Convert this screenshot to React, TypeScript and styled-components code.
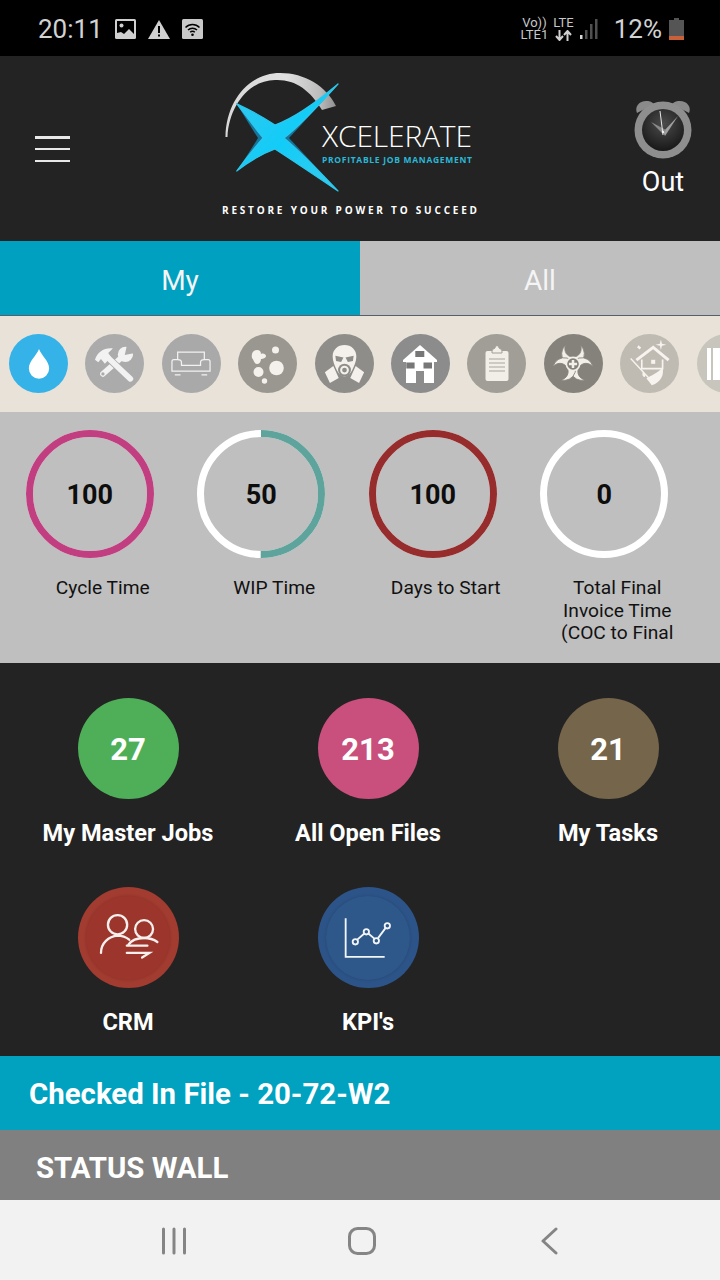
import React from "react";
import styled, { createGlobalStyle } from "styled-components";

const GlobalStyle = createGlobalStyle`
  html, body {
    margin: 0;
    padding: 0;
    background: #232323;
  }
  * {
    box-sizing: border-box;
  }
`;

const Page = styled.div`
  width: 720px;
  height: 1280px;
  display: flex;
  flex-direction: column;
  overflow: hidden;
  font-family: Roboto, "Liberation Sans", sans-serif;
`;

const StatusBar = styled.div`
  height: 56px;
  flex: none;
  background: #000;
  color: #d2d2d2;
  display: flex;
  align-items: center;
  padding: 2px 36px 0 38px;
  font-size: 26px;
  line-height: 30px;
`;

const StatusIcons = styled.div`
  display: flex;
  align-items: center;
  gap: 12px;
  margin-left: 12px;
`;

const StatusRight = styled.div`
  margin-left: auto;
  display: flex;
  align-items: center;
`;

const NetworkText = styled.div`
  display: flex;
  flex-direction: column;
  align-items: center;
  font-size: 13px;
  line-height: 12.5px;
  color: #c8c8c8;
  margin-right: 5px;
`;

const Battery = styled.span`
  margin-left: 7px;
  display: flex;
`;

const Percent = styled.span`
  margin-left: 15px;
`;

const Header = styled.header`
  height: 185px;
  flex: none;
  background: #232323;
  display: flex;
  padding-left: 35px;
`;

const MenuButton = styled.div`
  width: 35px;
  height: 26px;
  margin-top: 80px;
  display: flex;
  flex-direction: column;
  justify-content: space-between;
`;

const MenuLine = styled.span`
  height: 2.5px;
  background: #e8e8e8;
`;

const Logo = styled.svg`
  width: 260px;
  height: 150px;
  margin: 14px 0 0 150px;
  flex: none;
`;

const ClockBlock = styled.div`
  margin-left: auto;
  margin-right: 27px;
  width: 60px;
  padding-top: 43px;
  display: flex;
  flex-direction: column;
  align-items: center;
  color: #fff;
  font-size: 27px;
  line-height: 32px;
`;

const OutLabel = styled.span`
  margin-top: 7px;
`;

const Tabs = styled.div`
  height: 75px;
  flex: none;
  display: flex;
  border-bottom: 1px solid #55606a;
`;

const Tab = styled.div<{ $active?: boolean }>`
  flex: 1;
  display: flex;
  align-items: center;
  justify-content: center;
  padding-top: 4px;
  color: #f4f4f4;
  font-size: 28px;
  background: ${(p) => (p.$active ? "#00a0c0" : "#bfbfbf")};
`;

const CategoryStrip = styled.div`
  height: 96px;
  flex: none;
  background: #e8e2d9;
  display: flex;
  align-items: center;
  gap: 17.4px;
  padding: 0 0 1px 9px;
  overflow: hidden;
`;

const CategoryIcon = styled.div<{ $color: string }>`
  width: 59px;
  height: 59px;
  flex: none;
  border-radius: 50%;
  background: ${(p) => p.$color};
  display: flex;
  align-items: center;
  justify-content: center;
`;

const GaugeRow = styled.div`
  height: 251px;
  flex: none;
  background: #bfbfbf;
  display: flex;
  padding: 18px 0 0 17px;
`;

const GaugeColumn = styled.div`
  width: 171.5px;
  flex: none;
  display: flex;
  flex-direction: column;
  align-items: center;
`;

const GaugeDial = styled.div`
  width: 128px;
  height: 128px;
  position: relative;
  margin-right: 26px;
  padding-top: 2px;
  display: flex;
  align-items: center;
  justify-content: center;
  font-size: 27px;
  font-weight: 700;
  color: #0d0d0d;
`;

const GaugeRing = styled.svg`
  position: absolute;
  inset: 0;
`;

const GaugeValue = styled.span`
  position: relative;
`;

const GaugeLabel = styled.div`
  margin-top: 19px;
  width: 140px;
  text-align: center;
  font-size: 19.2px;
  line-height: 22.5px;
  color: #111;
`;

const Dashboard = styled.div`
  height: 393px;
  flex: none;
  background: #232323;
  display: grid;
  grid-template-columns: repeat(3, 240px);
  grid-auto-rows: 189px;
  padding: 35px 0 0 8px;
`;

const Tile = styled.div`
  display: flex;
  flex-direction: column;
  align-items: center;
`;

const TileCircle = styled.div<{ $color: string }>`
  width: 101px;
  height: 101px;
  flex: none;
  border-radius: 50%;
  background: ${(p) => p.$color};
  display: flex;
  align-items: center;
  justify-content: center;
  color: #fff;
  font-size: 31px;
  font-weight: 700;
`;

const TileNumber = styled.span`
  padding-top: 2px;
`;

const IconInner = styled.div<{ $color: string }>`
  width: 84px;
  height: 84px;
  border-radius: 50%;
  background: ${(p) => p.$color};
  box-shadow: 0 0 3px rgba(0, 0, 0, 0.18);
  display: flex;
  align-items: center;
  justify-content: center;
`;

const TileLabel = styled.div`
  margin-top: 20px;
  color: #fff;
  font-size: 23.6px;
  line-height: 28px;
  font-weight: 700;
  white-space: nowrap;
`;

const CheckedIn = styled.div`
  height: 74px;
  flex: none;
  background: #00a2c0;
  color: #fff;
  display: flex;
  align-items: center;
  padding: 2px 0 0 29px;
  font-size: 29.4px;
  font-weight: 700;
`;

const StatusWall = styled.div`
  height: 70px;
  flex: none;
  background: #808080;
  color: #fff;
  display: flex;
  align-items: center;
  padding: 6px 0 0 36px;
  font-size: 29.4px;
  font-weight: 700;
`;

const NavBar = styled.nav`
  height: 80px;
  flex: none;
  background: #f2f2f2;
  display: flex;
  align-items: center;
  gap: 161px;
  padding: 2px 0 0 161px;
`;

const gauges = [
  { value: "100", label: "Cycle Time", color: "#c13f80", pct: 100 },
  { value: "50", label: "WIP Time", color: "#5fa49c", pct: 50 },
  { value: "100", label: "Days to Start", color: "#962c2c", pct: 100 },
  { value: "0", label: "Total Final Invoice Time (COC to Final", color: "#fff", pct: 0 },
];

const Gauge = ({ value, label, color, pct }: (typeof gauges)[number]) => {
  const r = 60.5;
  const len = 2 * Math.PI * r;
  return (
    <GaugeColumn>
      <GaugeDial>
        <GaugeRing width="128" height="128">
          <circle cx="64" cy="64" r={r} fill="none" stroke="#fff" strokeWidth="7" />
          <circle
            cx="64"
            cy="64"
            r={r}
            fill="none"
            stroke={color}
            strokeWidth="7"
            strokeDasharray={`${(len * pct) / 100} ${len}`}
            transform="rotate(-90 64 64)"
          />
        </GaugeRing>
        <GaugeValue>{value}</GaugeValue>
      </GaugeDial>
      <GaugeLabel>{label}</GaugeLabel>
    </GaugeColumn>
  );
};

const Drop = () => (
  <svg width="22" height="31" viewBox="0 0 26 36">
    <path d="M13 1C16 9 25 15 25 24A12 12 0 0 1 1 24C1 15 10 9 13 1Z" fill="#fff" />
  </svg>
);

const Tools = () => (
  <svg width="43" height="40" viewBox="42 45 130 120">
    <path d="M72 135 140 75" stroke="#f2f2f2" strokeWidth="17" strokeLinecap="round" />
    <circle cx="140" cy="76" r="23" fill="#f2f2f2" />
    <path d="M138 78 146 42 178 70Z" fill="#ababab" />
    <circle cx="72" cy="135" r="5" fill="#ababab" />
    <path d="M85 84 155 150" stroke="#ababab" strokeWidth="22" />
    <path d="M85 84 155 150" stroke="#f2f2f2" strokeWidth="17" strokeLinecap="round" />
    <path d="M48 92C55 70 75 55 102 58L88 72 96 84 78 104 66 90 58 100Z" fill="#f2f2f2" />
  </svg>
);

const Sofa = () => (
  <svg width="40" height="25" viewBox="0 0 42 26" fill="none" stroke="#f2f2f2" strokeWidth="1.3">
    <path d="M7 9V1h28v8" />
    <path d="M11 15h20v-3c0-2 1-3 4-3h4c1 0 2 1 2 2v10H1V11c0-1 1-2 2-2h4c3 0 4 1 4 3Z" />
    <path d="M4 25h6M32 25h6" />
  </svg>
);

const Mold = () => (
  <svg width="44" height="40" viewBox="0 0 44 40" fill="#f4f1ec">
    <circle cx="30.5" cy="24" r="7.3" />
    <circle cx="29.5" cy="6" r="3.5" />
    <circle cx="12.5" cy="28" r="5" />
    <circle cx="18.5" cy="37" r="2.7" />
    <path d="M6 14c-1-4 1-8 5-8 3 0 4 2 4 4 2-1 5 0 5 2s-3 3-5 3c0 3-2 5-4 5-3 0-3-4-5-6Z" />
  </svg>
);

const Mask = () => (
  <svg width="43" height="42" viewBox="42 32 126 124" fill="#f4f1ec">
    <path d="M105 38C125 38 140 52 140 72 140 88 133 100 128 112 122 125 114 131 105 131 96 131 88 125 82 112 77 100 70 88 70 72 70 52 85 38 105 38Z" />
    <path d="M47 118 72 100 88 135 62 150ZM163 118 138 100 122 135 148 150Z" />
    <path d="M78 70 102 75 95 88 80 85ZM132 70 108 75 115 88 130 85Z" fill="#8f8d89" />
    <circle cx="105" cy="112" r="19" fill="#8f8d89" />
    <circle cx="105" cy="112" r="10" fill="none" stroke="#f4f1ec" strokeWidth="6" />
  </svg>
);

const House = () => (
  <svg width="34" height="38" viewBox="0 0 34 38" fill="#fff">
    <path d="M17 0 34 15v2h-3v21H21V26h-8v12H3V17H0v-2Z" />
    <path d="M12.300 6h9v6h-9ZM3.300 17.500h8.300v6H3.300ZM20.500 17.500h8.500v6h-8.500Z" fill="#777" />
  </svg>
);

const Clipboard = () => (
  <svg width="24" height="37" viewBox="0 0 24 37">
    <rect x="0.5" y="6" width="23" height="30" rx="2" fill="#f2eee8" />
    <path d="M7 6c0-2 2-2 3-3 0-3 4-3 4 0 1 1 3 1 3 3v2H7Z" fill="#f2eee8" stroke="#a09e97" />
    <path d="M4 14h16M4 18h16M4 22h16M4 26h16" stroke="#a8a69f" strokeWidth="1" />
  </svg>
);

const BioBlade = ({ angle }: { angle: number }) => (
  <path
    d="M81.700 40.600A36 36 0 1 0 128.300 40.600A26 26 0 1 1 81.700 40.600Z"
    fill="#f2eee8"
    stroke="#85827c"
    strokeWidth="2.500"
    transform={`rotate(${angle} 105 100)`}
  />
);

const Biohazard = () => (
  <svg width="44" height="44" viewBox="35 30 140 140">
    <BioBlade angle={0} />
    <BioBlade angle={120} />
    <BioBlade angle={240} />
    <circle cx="105" cy="100" r="21" fill="#85827c" stroke="#f2eee8" strokeWidth="5" />
    <path d="M105 87V113M92 100H118" stroke="#f2eee8" strokeWidth="8" />
  </svg>
);

const Cleaning = () => (
  <svg width="42" height="47" viewBox="50 40 125 140" fill="#f7f4ef">
    <path d="M72 100 122 62 168 100" fill="none" stroke="#f7f4ef" strokeWidth="9" />
    <path d="M88 98V125H150V98" fill="none" stroke="#f7f4ef" strokeWidth="5" />
    <path d="M116 99h12v12h-12Z" />
    <path d="M55 95 115 160" stroke="#f7f4ef" strokeWidth="4" />
    <path d="M102 155C115 145 135 140 150 122 155 145 145 165 118 175Z" />
    <path d="M92 133C95 140 102 145 97 150 90 150 88 142 92 133Z" />
    <path d="M145 38l3 13 13 3-13 3-3 13-3-13-13-3 13-3ZM78 56l8 6-4 6-8-6Z" />
  </svg>
);

const Binder = () => (
  <svg width="40" height="34" viewBox="0 0 40 34" fill="#fff">
    <path d="M1 1h4v32H1ZM7 1h30v32H7Z" />
  </svg>
);

const categories = [
  { color: "#35b2e8", icon: <Drop /> },
  { color: "#ababab", icon: <Tools /> },
  { color: "#a9a9a9", icon: <Sofa /> },
  { color: "#9a9791", icon: <Mold /> },
  { color: "#8f8d89", icon: <Mask /> },
  { color: "#8c8c8c", icon: <House /> },
  { color: "#a09e97", icon: <Clipboard /> },
  { color: "#85827c", icon: <Biohazard /> },
  { color: "#c0bbb2", icon: <Cleaning /> },
  { color: "#c8c5bc", icon: <Binder /> },
];

const CrmIcon = () => (
  <svg width="63" height="50" viewBox="110 95 190 150" fill="none" stroke="#f5f0ee" strokeWidth="7" strokeLinecap="round">
    <circle cx="172" cy="130" r="29" />
    <circle cx="252" cy="143" r="27" />
    <path d="M122 215C122 185 145 165 172 163 185 163 197 167 207 175" />
    <path d="M205 190C215 175 232 170 252 170 268 170 282 175 292 182" />
    <path d="M200 193H262M200 215H268L246 229" />
  </svg>
);

const KpiIcon = () => (
  <svg width="50" height="47" viewBox="850 100 150 140" fill="none" stroke="#f2f5f8" strokeWidth="5.5">
    <path d="M858 112V228H975" />
    <path d="M892 177 914 158M926 158 945 174M955 172 978 141" />
    <circle cx="887" cy="183" r="8" />
    <circle cx="920" cy="153" r="8" />
    <circle cx="950" cy="180" r="8" />
    <circle cx="983" cy="135" r="8" />
  </svg>
);

const AlarmClock = () => (
  <svg width="60" height="60" viewBox="0 0 60 60">
    <defs>
      <radialGradient id="face" cx="50%" cy="35%" r="70%">
        <stop offset="0%" stopColor="#4c4c4c" />
        <stop offset="100%" stopColor="#141414" />
      </radialGradient>
    </defs>
    <path d="M4 14C1 7 7 1 15 2c3 .5 5 2 6 3Z" fill="#8a8a8a" />
    <path d="M56 14c3-7-3-13-11-12-3 .5-5 2-6 3Z" fill="#8a8a8a" />
    <circle cx="30" cy="31" r="28.5" fill="#8e8e8e" />
    <circle cx="30" cy="31" r="21" fill="url(#face)" />
    <path d="M30 33 45 17 32 37Z" fill="#a0a0a0" />
    <path d="M30 35 18 23 33 31Z" fill="#8a8a8a" />
    <path d="M30 36 27 12" stroke="#e6e6e6" strokeWidth="1" />
    <circle cx="30" cy="33" r="1.2" fill="#eee" />
  </svg>
);

const App = () => {
  return (
    <Page>
      <GlobalStyle />
      <StatusBar>
        <span>20:11</span>
        <StatusIcons>
          <svg width="21" height="20" viewBox="0 0 21 20">
            <rect width="21" height="20" rx="1.5" fill="#d0d0d0" />
            <rect x="2" y="2" width="17" height="16" fill="#000" />
            <circle cx="6.5" cy="6.5" r="2" fill="#d0d0d0" />
            <path d="M2 18v-4l4-1 3 2 5-5 5 5v3Z" fill="#d0d0d0" />
          </svg>
          <svg width="22" height="19" viewBox="0 0 22 19">
            <path d="M11 0 22 19H0Z" fill="#d0d0d0" />
            <path d="M10 6h2v7h-2ZM10 14.5h2v2h-2Z" fill="#000" />
          </svg>
          <svg width="21" height="20" viewBox="0 0 21 20">
            <rect width="21" height="20" rx="1.5" fill="#c8c8c8" />
            <path d="M3.5 8.5c4-4 10-4 14 0M6 11c2.500-2.500 6.500-2.500 9 0M8.200 13.300c1.300-1.300 3.300-1.300 4.600 0" fill="none" stroke="#000" strokeWidth="1.500" />
            <circle cx="10.5" cy="15.800" r="1.300" fill="#000" />
          </svg>
        </StatusIcons>
        <StatusRight>
          <NetworkText>
            <span>Vo))</span>
            <span>LTE1</span>
          </NetworkText>
          <NetworkText>
            <span>LTE</span>
            <svg width="17" height="11" viewBox="0 0 17 11" fill="none" stroke="#d0d0d0" strokeWidth="2">
              <path d="M4.500 0v9M1 6l3.500 4L8 6M12.500 11V2M9 5l3.500-4L16 5" />
            </svg>
          </NetworkText>
          <svg width="20" height="22" viewBox="0 0 20 22">
            <rect x="1" y="17" width="2.500" height="4" fill="#d8d8d8" />
            <rect x="6" y="12" width="2.500" height="9" fill="#505050" />
            <rect x="11" y="6" width="2.500" height="15" fill="#505050" />
            <rect x="16" y="1" width="2.500" height="20" fill="#505050" />
          </svg>
          <Percent>12%</Percent>
          <Battery>
            <svg width="15" height="22" viewBox="0 0 15 22">
              <path d="M5 0h5v2h5v20H0V2h5Z" fill="#555" />
              <rect y="18" width="15" height="4" fill="#c8603a" />
            </svg>
          </Battery>
        </StatusRight>
      </StatusBar>
      <Header>
        <MenuButton>
          <MenuLine />
          <MenuLine />
          <MenuLine />
        </MenuButton>
        <Logo viewBox="220 70 260 150">
          <defs>
            <linearGradient id="arc" x1="0" y1="0" x2="1" y2="0">
              <stop offset="0%" stopColor="#d8d8d8" />
              <stop offset="55%" stopColor="#e0e0e0" />
              <stop offset="85%" stopColor="#bdbdbd" />
              <stop offset="100%" stopColor="#8f8f8f" />
            </linearGradient>
            <linearGradient id="xface" x1="0" y1="0" x2="1" y2="1">
              <stop offset="0%" stopColor="#34c8ec" />
              <stop offset="50%" stopColor="#12ccf8" />
              <stop offset="100%" stopColor="#38cbec" />
            </linearGradient>
          </defs>
          <path d="M225.500 137C226 100 250 73 280 73 305 73 326 86 336 106L322 110C310 90 295 79 275 80 250 80 229 105 227.500 137Z" fill="url(#arc)" />
          <path d="M236.700 103.700Q255 112 275 125 300 116 338 84 304 122 289 138 304 154 338 191 298 164 275 149 256 156 236.700 171 249 153 258 138 249 124 236.700 103.700Z" fill="#17749a" />
          <path
            d="M236.700 103.700Q255 112 275 125 300 116 338 84 302 124 284 138 302 153 338 191 298 164 275 149 256 156 236.700 171 250 153 263 138 252 124 236.700 103.700Z"
            fill="url(#xface)"
            stroke="#2cc6ec"
            strokeWidth="1.2"
            strokeLinejoin="round"
          />
          <text x="322" y="147" fontFamily="'Open Sans', sans-serif" fontSize="30" fontWeight="300" fill="#fff" textLength="150">XCELERATE</text>
          <text x="322" y="163" fontFamily="'Open Sans', sans-serif" fontSize="8.500" fontWeight="700" fill="#2ab8d8" textLength="150">PROFITABLE JOB MANAGEMENT</text>
          <text x="222" y="214" fontFamily="'Open Sans', sans-serif" fontSize="10" fontWeight="700" fill="#fff" textLength="255">RESTORE YOUR POWER TO SUCCEED</text>
        </Logo>
        <ClockBlock>
          <AlarmClock />
          <OutLabel>Out</OutLabel>
        </ClockBlock>
      </Header>
      <Tabs>
        <Tab $active>My</Tab>
        <Tab>All</Tab>
      </Tabs>
      <CategoryStrip>
        {categories.map((c, i) => (
          <CategoryIcon key={i} $color={c.color}>
            {c.icon}
          </CategoryIcon>
        ))}
      </CategoryStrip>
      <GaugeRow>
        {gauges.map((g) => (
          <Gauge key={g.label} {...g} />
        ))}
      </GaugeRow>
      <Dashboard>
        <Tile>
          <TileCircle $color="#4faf59">
            <TileNumber>27</TileNumber>
          </TileCircle>
          <TileLabel>My Master Jobs</TileLabel>
        </Tile>
        <Tile>
          <TileCircle $color="#c94f7c">
            <TileNumber>213</TileNumber>
          </TileCircle>
          <TileLabel>All Open Files</TileLabel>
        </Tile>
        <Tile>
          <TileCircle $color="#75654a">
            <TileNumber>21</TileNumber>
          </TileCircle>
          <TileLabel>My Tasks</TileLabel>
        </Tile>
        <Tile>
          <TileCircle $color="#a23b30">
            <IconInner $color="#9c362d">
              <CrmIcon />
            </IconInner>
          </TileCircle>
          <TileLabel>CRM</TileLabel>
        </Tile>
        <Tile>
          <TileCircle $color="#2d5488">
            <IconInner $color="#2f588a">
              <KpiIcon />
            </IconInner>
          </TileCircle>
          <TileLabel>KPI's</TileLabel>
        </Tile>
      </Dashboard>
      <CheckedIn>Checked In File - 20-72-W2</CheckedIn>
      <StatusWall>STATUS WALL</StatusWall>
      <NavBar>
        <svg width="26" height="28" viewBox="0 0 26 28" fill="none" stroke="#858585" strokeWidth="3" strokeLinecap="round">
          <path d="M2.500 2v24M13 2v24M23.500 2v24" />
        </svg>
        <svg width="28" height="28" viewBox="0 0 28 28" fill="none" stroke="#858585" strokeWidth="3">
          <rect x="1.500" y="1.500" width="25" height="25" rx="8" />
        </svg>
        <svg width="24" height="28" viewBox="0 0 24 28" fill="none" stroke="#858585" strokeWidth="3" strokeLinecap="round" strokeLinejoin="round">
          <path d="M19 2 6 14l13 12" />
        </svg>
      </NavBar>
    </Page>
  );
};

export default App;
